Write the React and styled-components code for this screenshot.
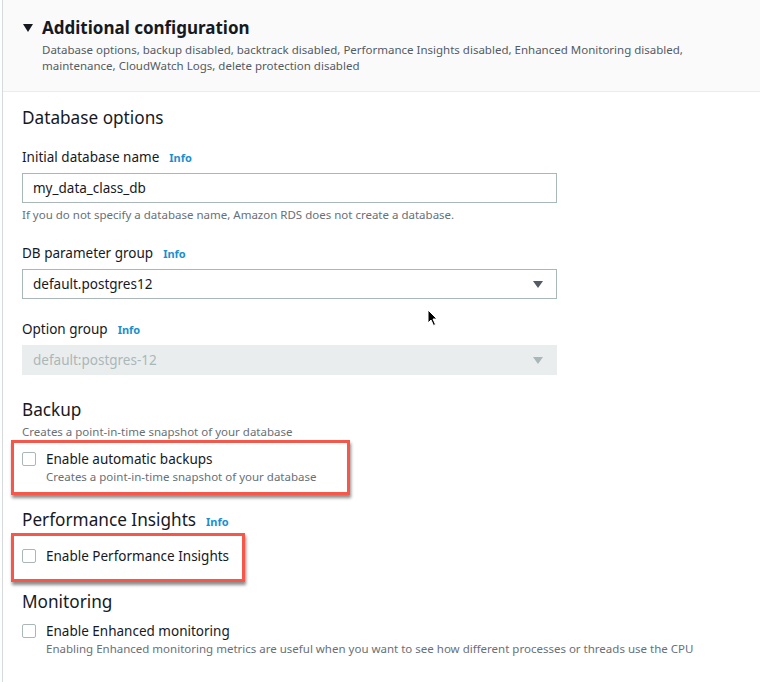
import React from 'react';
import styled, { createGlobalStyle } from 'styled-components';

const Global = createGlobalStyle`
  html, body { margin: 0; padding: 0; background: #fff; }
  body { font-family: "Noto Sans", "Open Sans", Arial, sans-serif; color: #16191f; }
`;

const Panel = styled.div`
  position: relative;
  margin-left: 2px;
  border-left: 1px solid #d5dbdb;
  height: 682px;
  overflow: hidden;
`;

const Header = styled.div`
  background: #fafafa;
  border-bottom: 1px solid #eaeded;
  height: 92px;
  box-sizing: border-box;
  padding: 16px 20px 0 20px;
`;

const TitleRow = styled.div`
  display: flex;
  align-items: center;
  gap: 9px;
`;

const Caret = styled.span`
  width: 0;
  height: 0;
  border-left: 5px solid transparent;
  border-right: 5px solid transparent;
  border-top: 8px solid #16191f;
`;

const Title = styled.h2`
  margin: 0;
  font-size: 17px;
  line-height: 24px;
  font-weight: 700;
`;

const HeaderDesc = styled.p`
  margin: 2px 0 0 19px;
  font-size: 11.5px;
  line-height: 16px;
  color: #545b64;
  max-width: 680px;
`;

const Body = styled.div`
  padding: 14px 19px 0 19px;
`;

const Heading = styled.h3`
  margin: ${p => p.$top}px 0 0 0;
  font-size: 17.2px;
  line-height: 24px;
  font-weight: 400;
  display: flex;
  align-items: baseline;
  gap: 10px;
`;

const Label = styled.div`
  margin-top: ${p => p.$top}px;
  font-size: 13.5px;
  line-height: 20px;
  display: flex;
  align-items: baseline;
  gap: 10px;
`;

const Info = styled.span`
  font-size: 11px;
  font-weight: 700;
  color: #1a8fd0;
`;

const Input = styled.div`
  margin-top: 5px;
  width: 535px;
  height: 30px;
  box-sizing: border-box;
  border: 1px solid #aab7b8;
  padding: 0 10px;
  display: flex;
  align-items: center;
  justify-content: space-between;
  font-size: 13.5px;
  background: ${p => (p.$disabled ? '#eaeded' : '#fff')};
  border-color: ${p => (p.$disabled ? '#eaeded' : '#aab7b8')};
  color: ${p => (p.$disabled ? '#aab7b8' : '#16191f')};
`;

const Arrow = styled.span`
  width: 0;
  height: 0;
  margin-right: 3px;
  border-left: 5px solid transparent;
  border-right: 5px solid transparent;
  border-top: 7px solid ${p => (p.$disabled ? '#aab7b8' : '#545b64')};
`;

const Hint = styled.p`
  margin: ${p => p.$top ?? 4}px 0 0 0;
  font-size: 11.5px;
  line-height: 16px;
  color: #687078;
  white-space: nowrap;
`;

const Highlight = styled.div`
  margin: ${p => p.$top}px 0 0 -11px;
  width: ${p => p.$width}px;
  box-sizing: border-box;
  border: 3px solid #f5584a;
  padding: ${p => p.$pad};
  box-shadow: 1px 3px 3px rgba(0, 0, 0, 0.45);
`;

const CheckRow = styled.div`
  margin-top: ${p => p.$top || 0}px;
  display: grid;
  grid-template-columns: 14px 1fr;
  column-gap: 10px;
  align-items: center;
`;

const Box = styled.span`
  width: 14px;
  height: 14px;
  box-sizing: border-box;
  border: 1px solid #aab7b8;
  border-radius: 2px;
  background: #fff;
`;

const CheckLabel = styled.span`
  font-size: 13.5px;
  line-height: 20px;
  white-space: nowrap;
`;

const CheckDesc = styled.span`
  grid-column: 2;
  font-size: 11.5px;
  line-height: 16px;
  color: #687078;
  white-space: nowrap;
`;

const Pointer = styled.svg`
  position: absolute;
  left: 424px;
  top: 309px;
`;

function Check({ label, desc, top }) {
  return (
    <CheckRow $top={top}>
      <Box />
      <CheckLabel>{label}</CheckLabel>
      {desc && <CheckDesc>{desc}</CheckDesc>}
    </CheckRow>
  );
}

export default function App() {
  return (
    <>
      <Global />
      <Panel>
        <Header>
          <TitleRow>
            <Caret />
            <Title>Additional configuration</Title>
          </TitleRow>
          <HeaderDesc>
            Database options, backup disabled, backtrack disabled, Performance Insights disabled, Enhanced Monitoring disabled,
            maintenance, CloudWatch Logs, delete protection disabled
          </HeaderDesc>
        </Header>
        <Body>
          <Heading $top={0}>Database options</Heading>

          <Label $top={17}>Initial database name <Info>Info</Info></Label>
          <Input>my_data_class_db</Input>
          <Hint>If you do not specify a database name, Amazon RDS does not create a database.</Hint>

          <Label $top={20}>DB parameter group <Info>Info</Info></Label>
          <Input>default.postgres12<Arrow /></Input>

          <Label $top={20}>Option group <Info>Info</Info></Label>
          <Input $disabled>default:postgres-12<Arrow $disabled /></Input>

          <Heading $top={23}>Backup</Heading>
          <Hint $top={2}>Creates a point-in-time snapshot of your database</Hint>
          <Highlight $top={0} $width={339} $pad="6px 8px 7px 8px">
            <Check label="Enable automatic backups" desc="Creates a point-in-time snapshot of your database" />
          </Highlight>

          <Heading $top={13}>Performance Insights <Info>Info</Info></Heading>
          <Highlight $top={-1} $width={234} $pad="10px 8px 13px 8px">
            <Check label="Enable Performance Insights" />
          </Highlight>

          <Heading $top={8}>Monitoring</Heading>
          <Check
            top={7}
            label="Enable Enhanced monitoring"
            desc="Enabling Enhanced monitoring metrics are useful when you want to see how different processes or threads use the CPU"
          />
        </Body>
        <Pointer width="12" height="18" viewBox="0 0 12 18">
          <path d="M1 1 L1 14 L4 11 L6.5 16.5 L8.5 15.5 L6 10 L10 10 Z" fill="#000" stroke="#fff" strokeWidth="1" />
        </Pointer>
      </Panel>
    </>
  );
}
